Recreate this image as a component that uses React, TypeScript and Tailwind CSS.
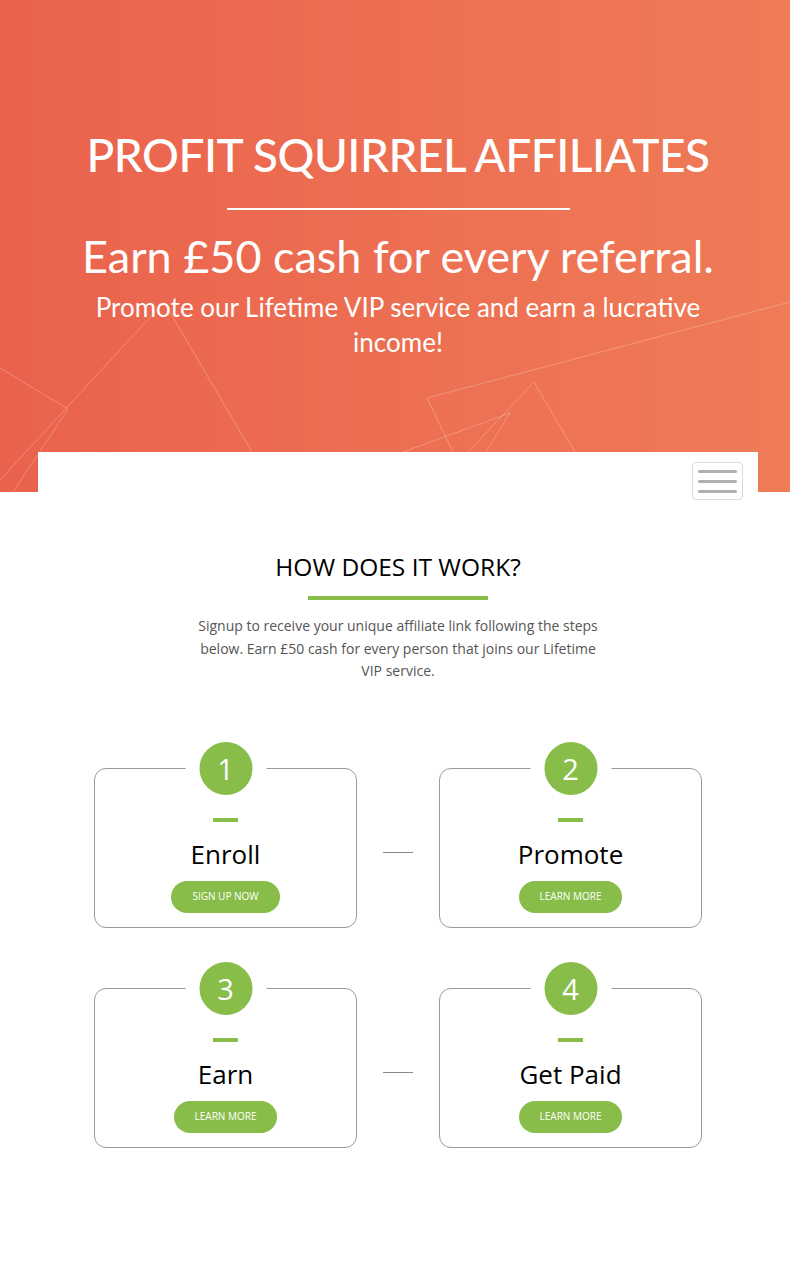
import React from "react";

const lines: [number, number, number, number][] = [
  [0, 368, 68, 409],
  [0, 480, 164, 302],
  [68, 409, 13, 492],
  [164, 302, 252, 452],
  [790, 302, 427, 398],
  [427, 398, 453, 452],
  [534, 382, 575, 452],
  [534, 382, 468, 452],
  [510, 413, 403, 452],
  [510, 413, 486, 452],
];

function Step({ n, title, cta }: { n: number; title: string; cta: string }) {
  return (
    <div className="relative w-[263px] h-[160px] rounded-[12px] border border-[#9a9a9a] flex flex-col items-center pt-[49px]">
      <div className="absolute top-[-27px] left-1/2 -translate-x-1/2 bg-white px-[14px]">
        <div className="w-[53px] h-[53px] rounded-full bg-[#88bd4a] flex items-center justify-center text-white text-[29px] leading-none">
          {n}
        </div>
      </div>
      <div className="w-[25px] h-[4px] bg-[#88bd4a]" />
      <div className="mt-[14px] text-[26px] leading-[36px] text-black">{title}</div>
      <button className="mt-[9px] h-[32px] px-[21px] rounded-full bg-[#88bd4a] text-white text-[10px] uppercase">
        {cta}
      </button>
    </div>
  );
}

function Row({ a, b }: { a: React.ReactNode; b: React.ReactNode }) {
  return (
    <div className="flex items-start justify-center">
      {a}
      <div className="mt-[84px] mx-[26px] w-[30px] h-px bg-[#8a8a8a]" />
      {b}
    </div>
  );
}

export default function App() {
  return (
    <div className="min-h-[1274px] bg-white" style={{ fontFamily: '"Open Sans", "Liberation Sans", sans-serif' }}>
      <section className="relative h-[492px] bg-gradient-to-r from-[#ea624d] to-[#ef7b57] overflow-hidden">
        <svg className="absolute inset-0 w-full h-full" viewBox="0 0 790 492" preserveAspectRatio="none">
          {lines.map(([x1, y1, x2, y2], i) => (
            <line key={i} x1={x1} y1={y1} x2={x2} y2={y2} stroke="rgba(255,255,255,0.25)" strokeWidth="1" />
          ))}
        </svg>
        <div
          className="relative flex flex-col items-center text-center text-white pt-[126px] pl-[6px]"
          style={{ fontFamily: 'Lato, "Liberation Sans", sans-serif' }}
        >
          <h1 className="text-[46px] leading-[58px] tracking-[-0.5px] font-medium">PROFIT SQUIRREL AFFILIATES</h1>
          <div className="mt-[24px] w-[343px] h-[2px] bg-white" />
          <h2 className="mt-[18px] text-[45px] leading-[56px] font-normal">Earn £50 cash for every referral.</h2>
          <p className="mt-[6px] w-[620px] text-[26px] leading-[35px] font-normal">
            Promote our Lifetime VIP service and earn a lucrative income!
          </p>
        </div>
      </section>

      <div className="pl-[6px]">
        <div className="relative mt-[-40px] mx-[32px] h-[50px] bg-white flex justify-end pr-[15px] pt-[10px]">
          <div className="w-[51px] h-[38px] rounded-[4px] border border-[#dddddd] flex flex-col items-center justify-center gap-[7px]">
            <span className="block w-[39px] h-[3px] rounded-full bg-[#b0b0b0]" />
            <span className="block w-[39px] h-[3px] rounded-full bg-[#b0b0b0]" />
            <span className="block w-[39px] h-[3px] rounded-full bg-[#b0b0b0]" />
          </div>
        </div>

        <section className="flex flex-col items-center pt-[49px]">
          <h3 className="text-[24.5px] leading-[32px] text-black">HOW DOES IT WORK?</h3>
          <div className="mt-[13px] w-[180px] h-[4px] bg-[#88bd4a]" />
          <p className="mt-[15px] w-[410px] text-center text-[14px] leading-[22.5px] text-[#555555]">
            Signup to receive your unique affiliate link following the steps below. Earn £50 cash for every person that joins our Lifetime VIP service.
          </p>

          <div className="mt-[85px] flex flex-col gap-[60px]">
            <Row a={<Step n={1} title="Enroll" cta="Sign up now" />} b={<Step n={2} title="Promote" cta="Learn more" />} />
            <Row a={<Step n={3} title="Earn" cta="Learn more" />} b={<Step n={4} title="Get Paid" cta="Learn more" />} />
          </div>
        </section>
      </div>
    </div>
  );
}
